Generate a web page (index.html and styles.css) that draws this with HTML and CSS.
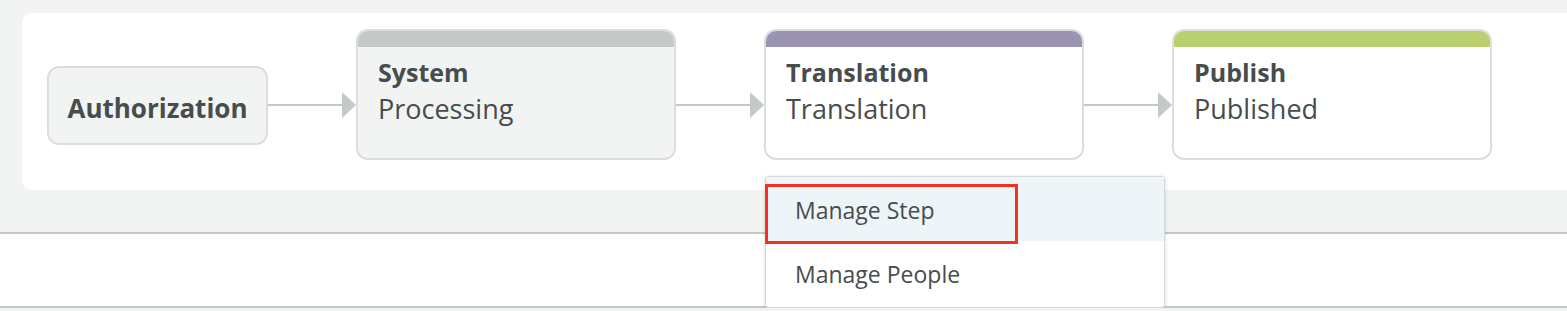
FILE: index.html
```html
<!DOCTYPE html>
<html lang="en">
<head>
  <meta charset="UTF-8" />
  <meta name="viewport" content="width=device-width, initial-scale=1.0" />
  <title>Workflow</title>
  <link rel="stylesheet" href="styles.css">
</head>
<body>
  <div class="top">
    <div class="card">
      <div class="steps">
        <div class="start">Authorization</div>

        <div class="link"><span class="line"></span><span class="head"></span></div>

        <div class="step step-system">
          <div class="bar"></div>
          <div class="step-body">
            <div class="step-title">System</div>
            <div class="step-state">Processing</div>
          </div>
        </div>

        <div class="link"><span class="line"></span><span class="head"></span></div>

        <div class="step step-translation">
          <div class="bar"></div>
          <div class="step-body">
            <div class="step-title">Translation</div>
            <div class="step-state">Translation</div>
          </div>
          <div class="menu">
            <div class="menu-item active">Manage Step</div>
            <div class="menu-item">Manage People</div>
            <div class="highlight"></div>
          </div>
        </div>

        <div class="link"><span class="line"></span><span class="head"></span></div>

        <div class="step step-publish">
          <div class="bar"></div>
          <div class="step-body">
            <div class="step-title">Publish</div>
            <div class="step-state">Published</div>
          </div>
        </div>
      </div>
    </div>
  </div>

  <div class="panel"></div>
</body>
</html>
```

FILE: styles.css
```css
body {
  margin: 0;
  font-family: "Open Sans", "Liberation Sans", sans-serif;
  background-color: #f2f4f3;
  color: #474d4c;
}

.top {
  padding: 13px 0 0 22px;
  height: 234px;
  box-sizing: border-box;
  border-bottom: 2px solid #c4c9c7;
}

.card {
  background-color: #fff;
  height: 177px;
  border-radius: 10px 0 0 10px;
  padding: 16px 0 0 25px;
  box-sizing: border-box;
}

.steps {
  display: flex;
  align-items: flex-start;
}

.start {
  margin-top: 37px;
  width: 221px;
  height: 79px;
  box-sizing: border-box;
  padding-top: 5px;
  background-color: #f2f4f3;
  border: 2px solid #dcdedd;
  border-radius: 12px;
  display: flex;
  align-items: center;
  justify-content: center;
  font-size: 26px;
  font-weight: 700;
}

.link {
  display: flex;
  align-items: center;
  margin-top: 63px;
  height: 26px;
  width: 88px;
}

.line {
  flex: 1;
  height: 2px;
  background-color: #c4c9c7;
}

.head {
  width: 0;
  height: 0;
  border-top: 13px solid transparent;
  border-bottom: 13px solid transparent;
  border-left: 14px solid #c4c9c7;
}

.step {
  position: relative;
  width: 320px;
  height: 131px;
  box-sizing: border-box;
  border: 2px solid #dcdedd;
  border-radius: 12px;
  background-color: #fff;
}

.bar {
  height: 16px;
  border-radius: 10px 10px 0 0;
}

.step-system {
  background-color: #f2f4f3;
}

.step-system .bar {
  background-color: #c4c9c7;
}

.step-translation .bar {
  background-color: #9a93b2;
}

.step-publish .bar {
  background-color: #b9cf70;
}

.step-body {
  padding: 10px 20px 0;
}

.step-title {
  font-size: 25px;
  font-weight: 700;
  line-height: 30px;
}

.step-state {
  margin-top: 4px;
  font-size: 27px;
  line-height: 36px;
}

.menu {
  position: absolute;
  left: -1px;
  top: 145px;
  width: 398px;
  background-color: #fff;
  border: 1px solid #d6d9d8;
  border-radius: 3px;
  box-shadow: 0 1px 4px rgba(0,0,0,0.15);
  padding-bottom: 2px;
  z-index: 2;
}

.menu-item {
  height: 64px;
  box-sizing: border-box;
  padding: 3px 0 0 29px;
  line-height: 60px;
  font-size: 23px;
}

.menu-item.active {
  background-color: #eef5f8;
}

.highlight {
  position: absolute;
  left: -1px;
  top: 7px;
  width: 253px;
  height: 60px;
  box-sizing: border-box;
  border: 3px solid #f0331f;
}

.panel {
  height: 72px;
  background-color: #fff;
  border-bottom: 2px solid #c4c9c7;
}
```
